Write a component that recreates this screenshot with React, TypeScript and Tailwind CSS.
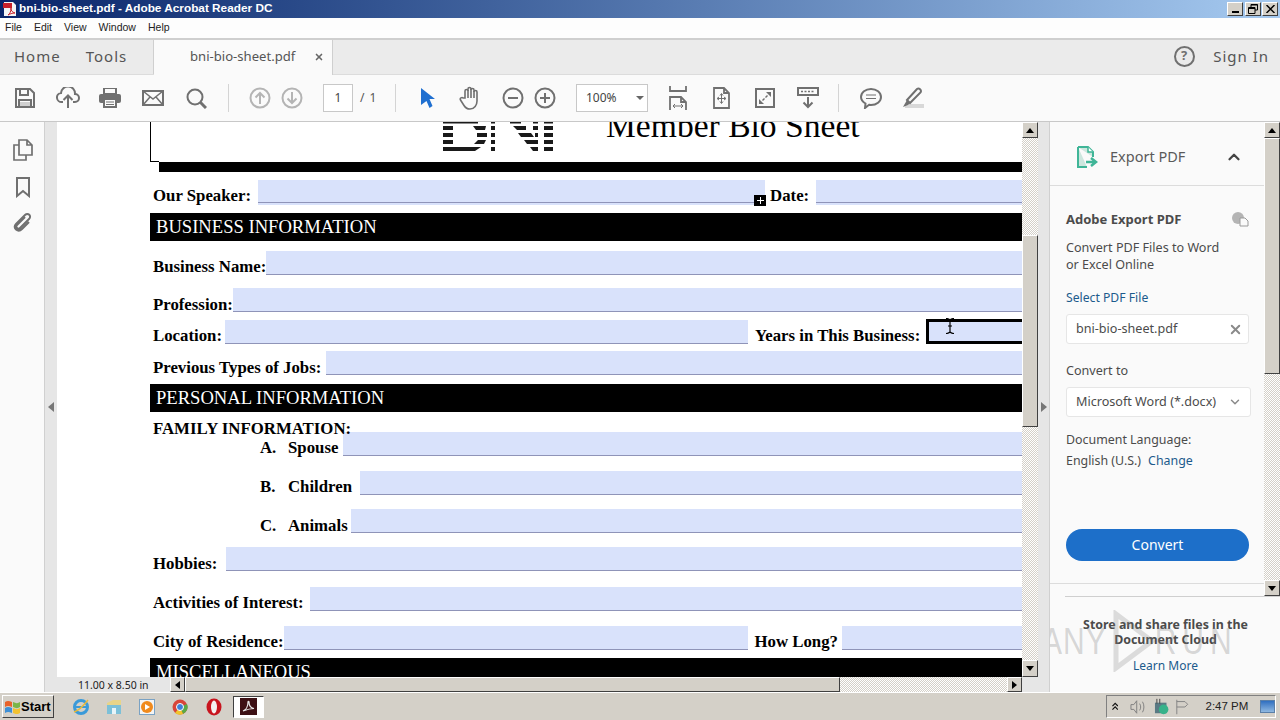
import { ChevronDown, ChevronUp, X } from 'lucide-react';

const serif = "font-['Liberation_Serif',serif]";
const ui = "font-['Noto_Sans',sans-serif]";
const win = "font-['Liberation_Sans',sans-serif]";
const dither = 'bg-[repeating-conic-gradient(#d4d0c8_0_25%,#ffffff_0_50%)] bg-[length:2px_2px]';
const raised = 'bg-[#d4d0c8] border border-t-white border-l-white border-r-[#404040] border-b-[#404040]';

function Field({ className = '', tall = false }: { className?: string; tall?: boolean }) {
  return (
    <div className={`bg-[#d9e2fb] ${tall ? 'h-[25px] pb-[2px] -mb-px' : 'h-[24px]'} ${className}`}>
      <div className="h-full border-b border-[#8f94b8]" />
    </div>
  );
}

function Label({ children, className = '' }: { children: React.ReactNode; className?: string }) {
  return <span className={`font-bold text-[16.8px] leading-[18px] -mb-px text-black whitespace-nowrap ${className}`}>{children}</span>;
}

function SectionBar({ title, className = '' }: { title: string; className?: string }) {
  return (
    <div className={`h-[28px] shrink-0 bg-black text-white text-[18.6px] leading-[28px] pl-[6px] whitespace-nowrap ${className}`}>{title}</div>
  );
}

function Arrow({ dir }: { dir: 'up' | 'down' | 'left' | 'right' }) {
  const pts = { up: '4,0 8,5 0,5', down: '0,0 8,0 4,5', left: '5,0 5,8 0,4', right: '0,0 5,4 0,8' }[dir];
  const box = dir === 'up' || dir === 'down' ? 'w-[8px] h-[5px]' : 'w-[5px] h-[8px]';
  return (
    <svg className={box} viewBox={dir === 'up' || dir === 'down' ? '0 0 8 5' : '0 0 5 8'}>
      <polygon points={pts} fill="#000" />
    </svg>
  );
}

function ScrollBtn({ dir, className = '' }: { dir: 'up' | 'down' | 'left' | 'right'; className?: string }) {
  return (
    <div className={`${raised} shrink-0 flex items-center justify-center ${className}`}>
      <Arrow dir={dir} />
    </div>
  );
}

function Tool({ children, className = '' }: { children: React.ReactNode; className?: string }) {
  return <div className={`w-[24px] h-[24px] shrink-0 flex items-center justify-center ${className}`}>{children}</div>;
}

const s = { fill: 'none', stroke: '#707070', strokeWidth: 2 };

function Toolbar() {
  return (
    <div className="h-[47px] shrink-0 flex items-center pl-[13px] bg-[#fafafa] border-b border-[#c8c8c8]">
      <Tool>
        <svg width="20" height="20" viewBox="0 0 20 20" {...s}><path d="M1 1h14l4 4v14H1zM5 1v6h8V1M4 19v-7h12v7" /><rect x="5" y="14" width="10" height="4" fill="#cfcfcf" stroke="none" /></svg>
      </Tool>
      <Tool className="ml-[19px]">
        <svg width="24" height="22" viewBox="0 0 24 22" {...s}><path d="M7 15H6a4.500 4.500 0 0 1-1-9 7 7 0 0 1 14 1 4 4 0 0 1 0 8h-2M12 21V9M7.500 13l4.500-4.500 4.500 4.500" /></svg>
      </Tool>
      <Tool className="ml-[18px]">
        <svg width="22" height="20" viewBox="0 0 22 20"><rect x="5" y="0" width="12" height="6" fill="none" stroke="#707070" strokeWidth="2" /><rect x="0" y="6" width="22" height="9" rx="2" fill="#707070" /><rect x="5" y="11" width="12" height="8" fill="#fafafa" stroke="#707070" strokeWidth="2" /><path d="M7 14h8M7 16.500h8" stroke="#707070" /></svg>
      </Tool>
      <Tool className="ml-[19px]">
        <svg width="22" height="16" viewBox="0 0 22 16" {...s}><rect x="1" y="1" width="20" height="14" /><path d="M1 1l10 8 10-8M1 15l7-8M21 15l-7-8" strokeWidth="1.500" /></svg>
      </Tool>
      <Tool className="ml-[19px]">
        <svg width="21" height="21" viewBox="0 0 21 21" {...s}><circle cx="9" cy="9" r="7.500" /><path d="M14.500 14.500l5.500 5.500" strokeWidth="3" /></svg>
      </Tool>
      <div className="w-px h-[28px] bg-[#d4d4d4] ml-[20px]" />
      <Tool className="ml-[19px]">
        <svg width="22" height="22" viewBox="0 0 22 22" fill="none" stroke="#b4b4b4" strokeWidth="2"><circle cx="11" cy="11" r="9.500" /><path d="M11 17V6M6.500 10.500L11 6l4.500 4.500" /></svg>
      </Tool>
      <Tool className="ml-[8px]">
        <svg width="22" height="22" viewBox="0 0 22 22" fill="none" stroke="#b4b4b4" strokeWidth="2"><circle cx="11" cy="11" r="9.500" /><path d="M11 5v11M6.500 11.500L11 16l4.500-4.500" /></svg>
      </Tool>
      <div className={`w-[30px] h-[28px] ml-[19px] border border-[#c8c8c8] bg-white flex items-center justify-center text-[12px] text-[#444] ${ui}`}>1</div>
      <span className={`ml-[7px] w-[17px] text-[12px] tracking-[1px] text-[#555] whitespace-nowrap ${ui}`}>/ 1</span>
      <div className="w-px h-[28px] bg-[#d4d4d4] ml-[18px]" />
      <Tool className="ml-[20px]">
        <svg width="14" height="20" viewBox="0 0 14 20"><path d="M0 0l14 11H8.500l3 7-3 2-3-7L0 17z" fill="#1f6fd0" /></svg>
      </Tool>
      <Tool className="ml-[18px]">
        <svg width="22" height="24" viewBox="0 0 22 24" {...s} strokeWidth="1.600"><path d="M6 12V5a1.500 1.500 0 0 1 3 0V3a1.500 1.500 0 0 1 3 0v1a1.500 1.500 0 0 1 3 0v2a1.500 1.500 0 0 1 3 0v9c0 4-2.500 8-7 8-3 0-4.500-1-6-3.500L1.500 14c-1-2 1.500-3 2.500-2z" /><path d="M9 4v8M12 3v9M15 5v7" /></svg>
      </Tool>
      <Tool className="ml-[19px]">
        <svg width="22" height="22" viewBox="0 0 22 22" {...s}><circle cx="11" cy="11" r="9.500" /><path d="M6 11h10" /></svg>
      </Tool>
      <Tool className="ml-[8px]">
        <svg width="22" height="22" viewBox="0 0 22 22" {...s}><circle cx="11" cy="11" r="9.500" /><path d="M6 11h10M11 6v10" /></svg>
      </Tool>
      <div className={`w-[72px] h-[28px] ml-[19px] border border-[#c8c8c8] bg-white flex items-center pl-[9px] text-[12px] text-[#444] ${ui}`}>
        100%
        <svg className="ml-[19px]" width="8" height="4" viewBox="0 0 8 4"><polygon points="0,0 8,0 4,4" fill="#666" /></svg>
      </div>
      <Tool className="ml-[18px]">
        <svg width="18" height="24" viewBox="0 0 18 24" {...s} strokeWidth="1.800"><path d="M1 0v5h16V0M1 24V11h11l5 5v8M12 11v5h5" /><path d="M4 20h10M4 20l2-2M4 20l2 2M14 20l-2-2M14 20l-2 2" strokeWidth="1" /></svg>
      </Tool>
      <Tool className="ml-[19px]">
        <svg width="17" height="22" viewBox="0 0 17 22" {...s} strokeWidth="1.800"><path d="M1 1h10l5 5v15H1zM11 1v5h5" /><path d="M8.500 7v9M4.500 11.500h8" strokeWidth="1" /><path d="M7 8.500l1.500-2 1.500 2M7 14.500l1.500 2 1.500-2M6 10l-2 1.500L6 13M11 10l2 1.500L11 13" strokeWidth="1" /></svg>
      </Tool>
      <Tool className="ml-[20px]">
        <svg width="20" height="20" viewBox="0 0 20 20"><rect x="1" y="1" width="18" height="18" fill="none" stroke="#707070" strokeWidth="2" /><path d="M11 4h5v5zM9 16H4v-5zM12 7l-2 2 1 1 2-2zM8 13l2-2-1-1-2 2z" fill="#707070" /></svg>
      </Tool>
      <Tool className="ml-[19px]">
        <svg width="22" height="22" viewBox="0 0 22 22"><rect x="1" y="1" width="20" height="7" fill="none" stroke="#707070" strokeWidth="2" /><path d="M4 4.500h14" stroke="#707070" strokeWidth="1.500" strokeDasharray="2 1.500" /><path d="M11 10v10M6.500 15.500L11 20l4.500-4.500" fill="none" stroke="#707070" strokeWidth="2" /></svg>
      </Tool>
      <div className="w-px h-[28px] bg-[#d4d4d4] ml-[18px]" />
      <Tool className="ml-[20px]">
        <svg width="22" height="21" viewBox="0 0 22 21" {...s}><path d="M11 1c5.500 0 10 3.500 10 8s-4.500 8-10 8c-.7 0-1.500 0-2-.2L5 20l.5-4.500C3 14 1 12 1 9c0-4.500 4.500-8 10-8z" /><path d="M6 7h10M6 10.500h10" strokeWidth="1.200" /></svg>
      </Tool>
      <Tool className="ml-[18px]">
        <svg width="22" height="22" viewBox="0 0 22 22"><rect x="3" y="17" width="19" height="4" fill="#d8d8d8" /><path d="M5 13L15 2c2-1.500 5 1 3.500 3.500L8 16z" fill="none" stroke="#707070" strokeWidth="2" /><path d="M5 13l3 3-2 2-5 2z" fill="#707070" /></svg>
      </Tool>
    </div>
  );
}

function DocumentView() {
  return (
    <div className="flex-1 min-w-0 flex flex-col">
      <div className="h-[555px] flex bg-white">
        <div className="flex-1 min-w-0 overflow-hidden bg-white">
          <div className={`ml-[93px] w-[900px] ${serif}`}>
            {/* masthead, the top of it is scrolled away */}
            <div className="h-[40px] overflow-hidden flex">
              <div className="w-[9px] h-[40px] shrink-0 border-l border-b border-black" />
              <svg className="ml-[284px] shrink-0" width="112" height="30" viewBox="443 122 112 30">
                <g fill="#1a1a1a">
                  <path d="M443 122h35v1.500h-35zM491 122h4v1.500h-4zM510 122h11v1.500h-11zM533 122h5v1.500h-5zM544 122h9v1.500h-9z" />
                  <path d="M443 126h10v4h-10zM473 126h13l-1 4h-9zM491 126h4v4h-4zM513 126h13v4h-9zM533 126h5v4h-5zM544 126h9v4h-9z" />
                  <path d="M443 133h10v4h-10zM477 133h10v4h-10zM491 133h4v4h-4zM518 133h13l3 4h-13zM535 133h3v4h-3zM544 133h9v4h-9z" />
                  <path d="M443 140h10v4h-10zM478 140h8l-2 4h-10zM491 140h4v4h-4zM524 140h14v4h-11zM544 140h9v4h-9z" />
                  <path d="M443 147h38l-6 4h-32zM491 147h4v4h-4zM530 147h8v4h-5zM544 147h9v4h-9z" />
                </g>
              </svg>
              <div className="ml-[51px] -mt-[12px] text-[33.6px] leading-[32px] text-black whitespace-nowrap">Member Bio Sheet</div>
            </div>
            <div className="ml-[9px] h-[10px] bg-black" />

            <div className="mt-[8px] flex items-end relative">
              <Label className="ml-[3px]">Our Speaker:</Label>
              <Field tall className="ml-[7px] w-[507px]" />
              <div className="absolute left-[604px] top-[15px] w-[12px] h-[11px] bg-black flex items-center justify-center">
                <svg width="7" height="7" viewBox="0 0 7 7"><path d="M3 0h1v3h3v1H4v3H3V4H0V3h3z" fill="#fff" /></svg>
              </div>
              <Label className="ml-[5px]">Date:</Label>
              <Field tall className="ml-[7px] flex-1" />
            </div>

            <SectionBar title="BUSINESS INFORMATION" className="mt-[9px]" />

            <div className="mt-[10px] flex items-end">
              <Label className="ml-[3px]">Business Name:</Label>
              <Field className="flex-1" />
            </div>
            <div className="mt-[13px] flex items-end">
              <Label className="ml-[3px] translate-y-px">Profession:</Label>
              <Field className="flex-1" />
            </div>
            <div className="mt-[8px] flex items-end">
              <Label className="ml-[3px]">Location:</Label>
              <Field className="ml-[3px] w-[523px]" />
              <Label className="ml-[7px]">Years in This Business:</Label>
              <div className="ml-[6px] -mt-px flex-1 h-[25px] bg-[#d9e2fb] border-[3px] border-black relative">
                {/* mouse pointer over the focused field */}
                <svg className="absolute left-[16px] -top-[4px]" width="10" height="16" viewBox="0 0 10 16" fill="none" stroke="#000" strokeWidth="1.200">
                  <path d="M1 .5c2 0 3 .5 4 1.500 1-1 2-1.500 4-1.500M5 2v12M1 15.500c2 0 3-.5 4-1.500 1 1 2 1.500 4 1.500M3 8h4" />
                </svg>
              </div>
            </div>
            <div className="mt-[7px] flex items-end">
              <Label className="ml-[3px] translate-y-px">Previous Types of Jobs:</Label>
              <Field className="ml-[5px] flex-1" />
            </div>

            <SectionBar title="PERSONAL INFORMATION" className="mt-[9px]" />

            <div className="mt-[5px] h-[21px] relative z-10">
              <Label className="ml-[3px] leading-[20px]">FAMILY INFORMATION:</Label>
            </div>
            <div className="-mt-[6px] flex items-end">
              <Label className="ml-[110px] w-[28px]">A.</Label>
              <Label>Spouse</Label>
              <Field className="ml-[5px] flex-1" />
            </div>
            <div className="mt-[15px] flex items-end">
              <Label className="ml-[110px] w-[28px]">B.</Label>
              <Label>Children</Label>
              <Field className="ml-[8px] flex-1" />
            </div>
            <div className="mt-[14px] flex items-end">
              <Label className="ml-[110px] w-[28px] translate-y-px">C.</Label>
              <Label className="translate-y-px">Animals</Label>
              <Field className="ml-[3px] flex-1" />
            </div>
            <div className="mt-[14px] flex items-end">
              <Label className="ml-[3px] translate-y-px">Hobbies:</Label>
              <Field className="ml-[9px] flex-1" />
            </div>
            <div className="mt-[16px] flex items-end">
              <Label className="ml-[3px]">Activities of Interest:</Label>
              <Field className="ml-[6px] flex-1" />
            </div>
            <div className="mt-[15px] flex items-end">
              <Label className="ml-[3px]">City of Residence:</Label>
              <Field className="w-[464px]" />
              <Label className="ml-[7px]">How Long?</Label>
              <Field className="ml-[4px] flex-1" />
            </div>

            <SectionBar title="MISCELLANEOUS" className="mt-[8px]" />
          </div>
        </div>
        <div className={`w-[16px] shrink-0 flex flex-col ${dither}`}>
          <ScrollBtn dir="up" className="h-[16px]" />
          <div className="h-[97px]" />
          <div className={`${raised} h-[192px]`} />
          <div className="flex-1" />
          <ScrollBtn dir="down" className="h-[17px]" />
        </div>
      </div>
      <div className="h-[15px] flex">
        <div className={`w-[113px] shrink-0 bg-[#e6e6e6] pl-[21px] text-[10.5px] leading-[16px] text-[#222] whitespace-nowrap ${ui}`}>11.00 x 8.50 in</div>
        <ScrollBtn dir="left" className="w-[15px]" />
        <div className={`flex-1 flex ${dither}`}>
          <div className={`${raised} w-[655px]`} />
        </div>
        <ScrollBtn dir="right" className="w-[15px]" />
        <div className="w-[16px] bg-[#e6e6e6]" />
      </div>
    </div>
  );
}

function ExportPanel() {
  return (
    <div className={`w-[230px] shrink-0 flex flex-col bg-[#fafafa] relative overflow-hidden text-[#4b4b4b] ${ui}`}>
      <div className="h-[474px] flex">
        <div className="w-[214px] shrink-0 flex flex-col">
          <div className="h-[64px] shrink-0 border-b border-[#dcdcdc] flex items-center pl-[27px] pt-[6px]">
            <svg width="21" height="22" viewBox="0 0 21 22">
              <path d="M1 1h10l5 5v5M1 1v20h9" fill="#cde6de" stroke="#3fb597" strokeWidth="2" />
              <path d="M11 1v5h5" fill="#fff" stroke="#3fb597" strokeWidth="1.500" />
              <path d="M9 16h8M14 12l5 4-5 4" fill="none" stroke="#3fb597" strokeWidth="2.500" />
            </svg>
            <span className="ml-[12px] w-[88px] text-[14.5px] text-[#5a5a5a] whitespace-nowrap">Export PDF</span>
            <ChevronUp className="ml-[27px] text-[#444]" size={18} strokeWidth={3} />
          </div>
          <div className="pl-[16px] pr-[15px] flex-1 flex flex-col">
            <div className="mt-[24px] flex items-center justify-between">
              <span className="text-[13px] font-bold text-[#4b4b4b] leading-[18px] whitespace-nowrap">Adobe Export PDF</span>
              <svg width="17" height="15" viewBox="0 0 17 15">
                <circle cx="6" cy="6" r="6" fill="#b4b4b4" />
                <path d="M8 6h5l3 3v5H8z" fill="#fafafa" stroke="#9a9a9a" />
              </svg>
            </div>
            <p className="mt-[11px] text-[12.6px] leading-[17px] whitespace-nowrap">Convert PDF Files to Word<br />or Excel Online</p>
            <div className="mt-[16px] text-[12.2px] leading-[17px] text-[#1c5a8c]">Select PDF File</div>
            <div className="mt-[8px] h-[30px] border border-[#e6e6e6] rounded-[3px] bg-white flex items-center justify-between pl-[9px] pr-[5px] pt-px text-[12.6px]">
              bni-bio-sheet.pdf
              <X size={15} strokeWidth={3} className="text-[#8a8a8a]" />
            </div>
            <div className="mt-[18px] text-[12.6px] leading-[17px]">Convert to</div>
            <div className="mt-[8px] h-[30px] w-[185px] border border-[#e6e6e6] rounded-[3px] bg-white flex items-center justify-between pl-[9px] pr-[8px] text-[12.6px] whitespace-nowrap">
              Microsoft Word (*.docx)
              <ChevronDown size={14} strokeWidth={2.500} className="text-[#8a8a8a]" />
            </div>
            <div className="mt-[14px] text-[12.4px] leading-[17px]">Document Language:</div>
            <div className="mt-[4px] text-[12.4px] leading-[17px] whitespace-nowrap">
              English (U.S.)
              <span className="ml-[7px] text-[#1c5a8c]">Change</span>
            </div>
            <div className="mt-[60px] h-[32px] rounded-full bg-[#1d6fc9] text-white text-[14px] flex items-center justify-center pb-[2px]">Convert</div>
          </div>
          <div className="h-[1px] bg-[#dcdcdc] mb-[12px]" />
        </div>
        <div className={`w-[16px] shrink-0 flex flex-col ${dither}`}>
          <ScrollBtn dir="up" className="h-[16px]" />
          <div className={`${raised} h-[236px]`} />
          <div className="flex-1" />
          <ScrollBtn dir="down" className="h-[16px]" />
        </div>
      </div>
      <div className="ml-[15px] border-t border-[#cfcfcf] flex-1 flex flex-col items-center pr-[14px]">
        <p className="mt-[20px] w-full text-center text-[12.4px] leading-[15px] font-bold text-[#4b4b4b] whitespace-nowrap">
          Store and share files in the<br />Document Cloud
        </p>
        <div className="mt-[10px] text-[12px] leading-[17px] text-[#1c5a8c]">Learn More</div>
      </div>
      {/* watermark laid over the panel */}
      <div className={`absolute left-[-8px] top-[488px] flex items-center text-[30px] leading-[62px] text-[#808080]/30 whitespace-nowrap pointer-events-none ${win}`}>
        <span className="scale-y-125 tracking-[1px]">ANY</span>
        <svg className="ml-[6px]" width="42" height="62" viewBox="0 0 42 62"><path d="M3 4l36 27L3 58z" fill="none" stroke="#808080" strokeOpacity="0.25" strokeWidth="5" /></svg>
        <span className="scale-y-125 tracking-[6px]">RUN</span>
      </div>
    </div>
  );
}

function Taskbar() {
  return (
    <div className="h-[28px] shrink-0 bg-[#d4d0c8] border-t border-white flex items-center pl-[2px]">
      <div className={`${raised} w-[52px] h-[23px] flex items-center pl-[1px] font-bold text-[13px] text-black ${win}`}>
        <svg width="17" height="15" viewBox="0 0 17 15">
          <path d="M1 3c2-1.500 4-1.500 7 0v5C5 6.500 3 6.500 1 8z" fill="#e8622a" />
          <path d="M9 3c3 1.500 5 1.500 7 0v5c-2 1.500-4 1.500-7 0z" fill="#7ab648" />
          <path d="M1 9c2-1.500 4-1.500 7 0v5c-3-1.500-5-1.500-7 0z" fill="#3d8fd6" />
          <path d="M9 9c3 1.500 5 1.500 7 0v5c-2 1.500-4 1.500-7 0z" fill="#f2c230" />
        </svg>
        Start
      </div>
      <svg className="ml-[18px]" width="18" height="18" viewBox="0 0 18 18">
        <circle cx="9" cy="9" r="6.500" fill="none" stroke="#3a9ad9" strokeWidth="3" />
        <path d="M4 9h11" stroke="#3a9ad9" strokeWidth="2" />
        <path d="M2 14c4-1 10-7 14-12" fill="none" stroke="#e8b93a" strokeWidth="1.500" />
      </svg>
      <svg className="ml-[16px]" width="16" height="16" viewBox="0 0 16 16">
        <path d="M1 4l6-3h8v13H1z" fill="#e8d488" />
        <rect x="1" y="6" width="14" height="9" fill="#7cc0d8" />
        <rect x="6" y="9" width="4" height="6" fill="#e8f4f8" />
      </svg>
      <div className="ml-[17px] w-[16px] h-[16px] border border-[#7aa2c4] bg-[#f4f4f4] flex items-center justify-center">
        <div className="w-[12px] h-[12px] rounded-full bg-[#f08a1d] flex items-center justify-center">
          <svg width="6" height="6" viewBox="0 0 6 6"><path d="M1 0l5 3-5 3z" fill="#fff" /></svg>
        </div>
      </div>
      <svg className="ml-[17px]" width="16" height="16" viewBox="0 0 16 16">
        <circle cx="8" cy="8" r="7.500" fill="#d8453a" />
        <path d="M8 8L15 5a7.500 7.500 0 0 1-4 10z" fill="#5aaa47" />
        <path d="M8 8L3 14a7.500 7.500 0 0 0 8 1z" fill="#f0c52e" />
        <circle cx="8" cy="8" r="3.500" fill="#3f80d8" stroke="#fff" />
      </svg>
      <svg className="ml-[18px]" width="16" height="18" viewBox="0 0 16 18">
        <ellipse cx="8" cy="9" rx="7.500" ry="8.500" fill="#c8141e" />
        <ellipse cx="8" cy="9" rx="3" ry="6.500" fill="#f4f0f0" />
      </svg>
      <div className="ml-[11px] w-[31px] h-[22px] bg-white border border-t-[#404040] border-l-[#404040] border-r-white border-b-white flex items-center justify-center">
        <div className="w-[17px] h-[17px] bg-[#3d1014] flex items-center justify-center">
          <svg width="13" height="13" viewBox="0 0 13 13"><path d="M1 11c3-1 5-5 5-9 0-1 1-1 1 0 0 4 2 6 5 6.500-4 0-7 1-11 2.500z" fill="none" stroke="#e8e8e8" strokeWidth="1.200" /></svg>
        </div>
      </div>
      <div className={`ml-auto mr-[4px] w-[170px] h-[23px] border border-t-[#808080] border-l-[#808080] border-r-white border-b-white flex items-center text-[11.5px] text-[#222] ${win}`}>
        <svg className="ml-[5px]" width="7" height="9" viewBox="0 0 7 9" fill="none" stroke="#111" strokeWidth="1.300"><path d="M.5 4l3-3 3 3M.5 8l3-3 3 3" /></svg>
        <svg className="ml-[12px]" width="17" height="16" viewBox="0 0 16 15" fill="none" stroke="#808080"><path d="M1 5h3l3-4v13l-3-4H1zM10 4c1.500 2 1.500 5 0 7M13 2c2 3 2 8 0 11" /></svg>
        <svg className="ml-[8px]" width="17" height="18" viewBox="0 0 16 17">
          <rect x="1" y="4" width="12" height="11" fill="#5a7a84" />
          <circle cx="10" cy="11" r="5" fill="#37b28a" />
          <path d="M3 0v5M6 0v5" stroke="#444" />
        </svg>
        <svg className="ml-[6px]" width="16" height="16" viewBox="0 0 16 16" fill="none" stroke="#808080"><path d="M2 0v16M2 2h9l3 3-3 3H2" /></svg>
        <span className="ml-[16px] whitespace-nowrap">2:47 PM</span>
        <div className="ml-[12px] w-[16px] h-[13px] bg-gradient-to-b from-[#2f6fc0] to-[#8fb8e0] border border-[#5a7fa8]" />
      </div>
    </div>
  );
}

export default function App() {
  return (
    <div className="w-[1280px] h-[720px] flex flex-col overflow-hidden bg-white">
      <div className="h-[18px] shrink-0 flex items-center pr-[2px] bg-gradient-to-r from-[#0a246a] to-[#a6caf0]">
        <svg className="ml-[2px] shrink-0" width="16" height="16" viewBox="0 0 16 16">
          <path d="M2 1h9l3 3v11H2z" fill="#f4f4f4" />
          <rect x="1" y="2" width="9" height="5" fill="#c8202a" />
          <path d="M6 14c2-1 3-4 3-7 0 3 1 4 4 5-3 0-5 1-7 2z" fill="none" stroke="#c8202a" />
        </svg>
        <span className={`ml-[1px] text-white font-bold text-[11.8px] whitespace-nowrap ${win}`}>bni-bio-sheet.pdf - Adobe Acrobat Reader DC</span>
        <div className="ml-auto flex">
          <div className={`${raised} w-[16px] h-[14px] flex items-end justify-center pb-[2px]`}><div className="w-[7px] h-[2px] bg-black" /></div>
          <div className={`${raised} ml-[2px] w-[16px] h-[14px] flex items-center justify-center`}>
            <svg width="10" height="10" viewBox="0 0 10 10" fill="none" stroke="#000"><path d="M3 3V.5h6.500V6H7M.5 3.500H7v6H.5z" /><path d="M3 1h6.500M.5 4.500H7" /></svg>
          </div>
          <div className={`${raised} ml-[1px] w-[16px] h-[14px] flex items-center justify-center`}>
            <svg width="9" height="8" viewBox="0 0 9 8" stroke="#000" strokeWidth="1.500"><path d="M.5 0l8 8M8.500 0l-8 8" /></svg>
          </div>
        </div>
      </div>
      <div className={`h-[20px] shrink-0 bg-[#fdfdfd] flex items-center pl-[5px] gap-[12px] text-[10.5px] text-[#222] ${win}`}>
        <span>File</span><span>Edit</span><span>View</span><span>Window</span><span>Help</span>
      </div>
      <div className={`h-[37px] shrink-0 bg-[#ebebeb] border-t-2 border-[#cfcfcf] border-b border-b-[#dcdcdc] flex ${ui}`}>
        <div className="w-[154px] shrink-0 flex items-center pl-[14px] pb-[2px] gap-[25px] text-[15px] tracking-[1px] text-[#555] border-r border-[#cfcfcf]">
          <span>Home</span><span>Tools</span>
        </div>
        <div className="w-[179px] shrink-0 -mb-px bg-[#fafafa] border-r border-[#cfcfcf] flex items-center pl-[36px] pb-px text-[13.1px] text-[#555]">
          bni-bio-sheet.pdf
          <X className="ml-[19px] text-[#666]" size={10} strokeWidth={4} />
        </div>
        <div className="ml-auto flex items-center pr-[11px] pb-[2px] text-[15px] tracking-[1px] text-[#555]">
          <div className="w-[21px] h-[21px] rounded-full border-2 border-[#707070] flex items-center justify-center text-[13px] font-bold text-[#707070]">?</div>
          <span className="ml-[18px]">Sign In</span>
        </div>
      </div>
      <Toolbar />
      <div className="flex-1 min-h-0 flex">
        <div className="w-[45px] shrink-0 bg-[#fafafa] border-r border-[#d0d0d0] flex flex-col items-center pt-[17px] pl-[1px]">
          <svg width="20" height="22" viewBox="0 0 20 22" {...s} strokeWidth="1.700">
            <path d="M6 16V1h8l5 5v10zM14 1v5h5" />
            <path d="M6 6H1v15h12v-5" />
          </svg>
          <svg className="mt-[16px]" width="14" height="21" viewBox="0 0 14 21" {...s}><path d="M1 1h12v18l-6-5-6 5z" /></svg>
          <svg className="mt-[14px]" width="21" height="21" viewBox="0 0 21 21" {...s}><path d="M13 5l-8 8c-2 2 1 5 3 3l9-9c3-3-1-7-4-4l-9 9c-4 4 2 9 6 5l7-7" /></svg>
        </div>
        <div className="w-[12px] shrink-0 bg-[#e6e6e6] flex items-center justify-center">
          <svg width="6" height="10" viewBox="0 0 6 10"><polygon points="6,0 6,10 0,5" fill="#777" /></svg>
        </div>
        <DocumentView />
        <div className="w-[12px] shrink-0 bg-[#e6e6e6] border-r border-[#d0d0d0] flex items-center justify-center">
          <svg width="6" height="10" viewBox="0 0 6 10"><polygon points="0,0 6,5 0,10" fill="#777" /></svg>
        </div>
        <ExportPanel />
      </div>
      <Taskbar />
    </div>
  );
}
